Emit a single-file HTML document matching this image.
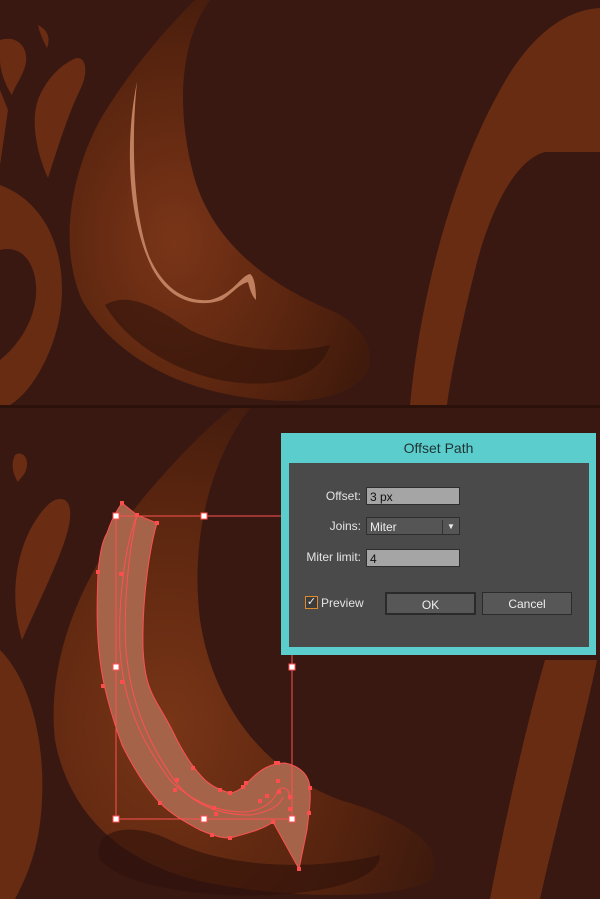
<!DOCTYPE html>
<html><head><meta charset="utf-8"><style>
html,body{margin:0;padding:0;width:600px;height:899px;overflow:hidden;background:#3a1812;}
svg{position:absolute;left:0;top:0}
.dlg{position:absolute;left:281px;top:433px;width:315px;height:222px;background:#5bcdcd;box-sizing:border-box;}
.dlg .t{position:absolute;left:0;right:0;top:7px;text-align:center;font:14px "Liberation Sans",sans-serif;color:#1f3333;}
.in{position:absolute;left:8px;top:30px;width:300px;height:184px;background:#4a4a4a;}
.lb{position:absolute;font:12px "Liberation Sans",sans-serif;color:#e4e4e4;text-align:right;width:80px;}
.fld{position:absolute;left:77px;width:94px;height:18px;background:#a5a5a5;border:1px solid #2e2e2e;font:12px "Liberation Sans",sans-serif;color:#111;line-height:18px;padding-left:3px;box-sizing:border-box;}
.btn{position:absolute;height:23px;background:#575757;border:1px solid #2b2b2b;font:12px "Liberation Sans",sans-serif;color:#eee;text-align:center;line-height:22px;box-sizing:border-box;}
</style></head><body>
<svg width="600" height="899" viewBox="0 0 600 899">
<defs>
<radialGradient id="g1" cx="0.35" cy="0.6" r="0.7"><stop offset="0" stop-color="#7a3518"/><stop offset="0.6" stop-color="#5a250f"/><stop offset="1" stop-color="#401a0c"/></radialGradient>
<radialGradient id="g2" cx="0.3" cy="0.65" r="0.75"><stop offset="0" stop-color="#783517"/><stop offset="0.6" stop-color="#5a250f"/><stop offset="1" stop-color="#3e1a0d"/></radialGradient>
</defs>
<rect x="0" y="0" width="600" height="406" fill="#3a1812"/>
<path d="M410 405 C420 300 450 180 500 90 C530 35 565 10 600 8 L600 152 L545 152 C515 160 490 210 475 270 C460 330 450 380 447 405 Z" fill="#672c12"/>
<path d="M0 185 C40 200 62 240 62 290 C62 340 35 390 10 405 L0 405 L0 360 C25 340 38 310 36 285 C34 260 20 245 0 250 Z" fill="#672c12"/>
<path d="M0 40 C15 35 28 45 26 62 C24 75 15 85 12 95 C5 85 0 70 0 60 Z" fill="#6a2d13"/>
<path d="M38 25 C44 28 52 35 47 48 C45 44 40 35 38 25 Z" fill="#6a2d13"/>
<path d="M72 60 C85 52 90 70 80 90 C70 110 60 140 48 178 C35 150 30 115 40 95 C48 78 60 66 72 60 Z" fill="#6a2d13"/>
<path d="M0 90 L8 110 L0 165 Z" fill="#6a2d13"/>
<path d="M195 0 L210 0 C180 40 175 110 195 180 C215 245 270 285 330 310 C365 325 378 355 365 375 C345 400 300 405 250 398 C170 388 110 350 82 300 C60 250 68 180 100 120 C130 70 165 30 195 0 Z" fill="url(#g1)"/>
<path d="M105 305 C130 290 160 310 190 330 C230 350 290 355 330 345 C320 380 270 390 220 380 C170 370 125 340 105 305 Z" fill="#2f120a" opacity="0.6"/>
<path d="M137 82 C127 130 124 210 152 268 C170 302 198 308 222 300 C234 292 238 285 248 282 C250 290 252 296 256 300 C256 287 254 276 250 274 C240 276 234 294 210 300 C186 302 164 290 149 256 C133 212 131 140 137 82 Z" fill="#c08060"/>
<rect x="0" y="405" width="600" height="3" fill="#2c110b"/>
<path d="M545 660 L597 660 C585 720 560 810 540 899 L490 899 C505 820 525 730 545 660 Z" fill="#672c12"/>
<path d="M0 650 C30 680 45 740 42 800 C40 850 25 880 15 899 L0 899 Z" fill="#672c12"/>
<path d="M15 455 C22 450 30 458 26 470 C24 476 20 478 18 482 C14 476 10 465 15 455 Z" fill="#6a2d13"/>
<path d="M55 500 C70 495 75 510 65 540 C55 570 35 610 22 640 C10 600 15 560 30 530 C40 512 48 503 55 500 Z" fill="#6a2d13"/>
<path d="M232 408 L250 408 C210 460 190 540 200 620 C212 700 260 770 340 800 C410 820 450 850 430 880 C400 899 300 899 220 885 C130 870 70 820 55 740 C45 650 90 560 150 490 C180 455 210 425 232 408 Z" fill="url(#g2)"/>
<path d="M100 860 C90 830 130 820 170 840 C230 870 320 870 380 855 C380 885 300 899 220 895 C160 890 120 880 100 860 Z" fill="#2d110a" opacity="0.6"/>
<path d="M122 503 L137 515 L157 523 C150 547 142 597 143 647 C145 697 157 697 177 740 C185 755 193 768 205 780 C213 787 220 790 230 793 C238 792 243 787 250 780 C260 770 270 763 285 763 C300 766 310 775 310 790 C311 800 309 813 307 830 L299 869 L273 822 C265 828 253 832 230 838 C220 838 212 835 200 830 C187 823 172 815 160 803 C145 787 133 767 122 745 C113 720 103 687 100 660 C96 630 97 600 98 572 C100 550 103 540 107 533 C112 518 117 510 122 503 Z" fill="#a5644a" stroke="#ff5050" stroke-width="1"/>
<path d="M137 515 C125 545 118 600 120 650 C123 700 140 740 170 780 C190 800 215 812 245 812 C265 810 275 800 278 790 C285 785 290 790 290 800" fill="none" stroke="#ff5050" stroke-width="1"/>
<path d="M137 515 C130 545 123 600 126 650 C130 700 148 745 178 785 C195 805 220 815 250 815 C270 812 280 805 283 797" fill="none" stroke="#ff5050" stroke-width="1"/>
<path d="M116 516 L281 516 M116 516 L116 819 L292 819 L292 655" fill="none" stroke="#ff5050" stroke-width="1"/>
<g fill="#fff" stroke="#ff5050" stroke-width="1">
<rect x="113" y="513" width="6" height="6"/><rect x="201" y="513" width="6" height="6"/>
<rect x="113" y="664" width="6" height="6"/><rect x="289" y="664" width="6" height="6"/>
<rect x="113" y="816" width="6" height="6"/><rect x="201" y="816" width="6" height="6"/><rect x="289" y="816" width="6" height="6"/>
</g>
<g fill="#ff4d4d">
<rect x="120" y="501" width="4" height="4"/><rect x="135" y="513" width="4" height="4"/><rect x="155" y="521" width="4" height="4"/>
<rect x="96" y="570" width="4" height="4"/><rect x="119" y="572" width="4" height="4"/><rect x="101" y="684" width="4" height="4"/>
<rect x="120" y="680" width="4" height="4"/><rect x="191" y="766" width="4" height="4"/><rect x="175" y="778" width="4" height="4"/>
<rect x="173" y="788" width="4" height="4"/><rect x="158" y="801" width="4" height="4"/><rect x="218" y="788" width="4" height="4"/>
<rect x="228" y="791" width="4" height="4"/><rect x="241" y="785" width="4" height="4"/><rect x="244" y="781" width="4" height="4"/>
<rect x="274" y="761" width="6" height="4"/><rect x="308" y="786" width="4" height="4"/><rect x="307" y="811" width="4" height="4"/>
<rect x="297" y="867" width="4" height="4"/><rect x="271" y="820" width="4" height="4"/><rect x="210" y="833" width="4" height="4"/>
<rect x="228" y="836" width="4" height="4"/><rect x="212" y="806" width="4" height="4"/><rect x="214" y="812" width="4" height="4"/>
<rect x="258" y="799" width="4" height="4"/><rect x="265" y="794" width="4" height="4"/><rect x="277" y="790" width="4" height="4"/>
<rect x="288" y="795" width="4" height="4"/><rect x="288" y="807" width="4" height="4"/><rect x="276" y="779" width="4" height="4"/>
</g>
</svg>
<div class="dlg"><div class="t">Offset Path</div>
<div class="in">
<div class="lb" style="left:-8px;top:26px">Offset:</div><div class="fld" style="top:24px">3 px</div>
<div class="lb" style="left:-8px;top:56px">Joins:</div><div class="fld" style="top:54px;background:#555;color:#eee">Miter<span style="position:absolute;right:0;top:2px;width:16px;height:14px;border-left:1px solid #333;font-size:8px;text-align:center;line-height:14px">▼</span></div>
<div class="lb" style="left:-8px;top:87px">Miter limit:</div><div class="fld" style="top:86px">4</div>
<div style="position:absolute;left:16px;top:133px;width:11px;height:11px;border:1px solid #e08a30;background:#3c3c3c;color:#eee;font-size:11px;line-height:11px;text-align:center">✓</div>
<div class="lb" style="left:32px;top:133px;text-align:left">Preview</div>
<div class="btn" style="left:96px;top:129px;width:91px;border:2px solid #2a2a2a">OK</div>
<div class="btn" style="left:193px;top:129px;width:90px">Cancel</div>
</div></div>
</body></html>
